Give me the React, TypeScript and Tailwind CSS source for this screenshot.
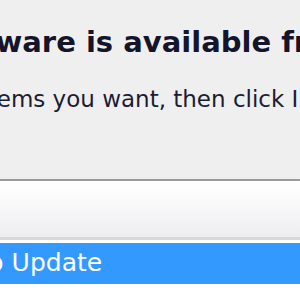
export default function App() {
  return (
    <div className="w-[300px] h-[300px] overflow-hidden bg-white font-['DejaVu_Sans',sans-serif]">
      {/* Dialog header area */}
      <div className="h-[179px] bg-[#efefef] overflow-hidden whitespace-nowrap">
        <div className="pt-[25px] ml-[-149px] text-[29px] leading-[34px] font-bold text-[#14142a]">
          New software is available from Microsoft
        </div>
        <div className="mt-[25px] ml-[-142px] text-[23px] leading-[30px] text-[#1c1c34]">
          Select the items you want, then click Install
        </div>
      </div>
      <div className="h-[2px] bg-[#9a9a9a]" />

      {/* List column header */}
      <div className="h-[56px] bg-gradient-to-b from-white via-[#f7f7f9] to-[#ededef]" />
      <div className="h-[3px] bg-[#d8d8d8]" />
      <div className="h-[3px] bg-white" />

      {/* Selected row */}
      <div className="h-[41px] bg-[#3399ff] overflow-hidden whitespace-nowrap">
        <div className="ml-[-107px] pt-[5px] text-[25px] leading-[30px] text-white">
          Ready to Update
        </div>
      </div>
    </div>
  );
}
